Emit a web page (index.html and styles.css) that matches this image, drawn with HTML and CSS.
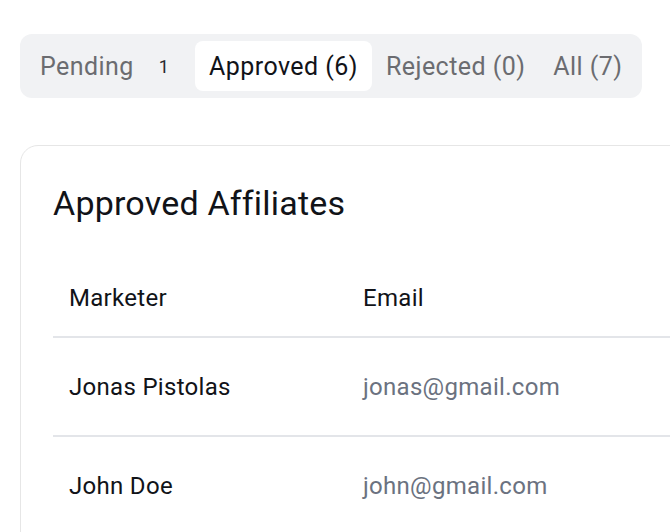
FILE: index.html
```html
<!DOCTYPE html>
<html>
<head>
<meta charset="utf-8">
<link rel="stylesheet" href="styles.css">
</head>
<body>
<div class="page">
  <div class="tabs">
    <div class="tab">Pending <span class="badge">1</span></div>
    <div class="tab active">Approved (6)</div>
    <div class="tab">Rejected (0)</div>
    <div class="tab">All (7)</div>
  </div>
  <div class="card">
    <h2 class="title">Approved Affiliates</h2>
    <table class="table">
      <thead>
        <tr><th class="col-name">Marketer</th><th>Email</th></tr>
      </thead>
      <tbody>
        <tr><td class="col-name">Jonas Pistolas</td><td class="email">jonas@gmail.com</td></tr>
        <tr><td class="col-name">John Doe</td><td class="email">john@gmail.com</td></tr>
      </tbody>
    </table>
  </div>
</div>
</body>
</html>
```
FILE: styles.css
```css
html, body {
  margin: 0;
  padding: 0;
  overflow: hidden;
  background: #ffffff;
}
body {
  font-family: Roboto, "Noto Sans", sans-serif;
  color: #111318;
}
.page {
  padding: 34px 0 0 20px;
}
.tabs {
  display: inline-flex;
  align-items: center;
  background: #f1f2f4;
  border-radius: 12px;
  padding: 7px 6px;
}
.tab {
  display: flex;
  align-items: center;
  height: 50px;
  padding: 0 14px;
  font-size: 25px;
  letter-spacing: 0.45px;
  color: #6b6c70;
  border-radius: 8px;
  box-sizing: border-box;
  white-space: nowrap;
}
.tab.active {
  background: #ffffff;
  color: #111318;
}
.badge {
  margin-left: 13px;
  padding: 0 12px;
  font-size: 18px;
  letter-spacing: 0;
  color: #2a2a2e;
}
.card {
  margin-top: 47px;
  width: 800px;
  border: 1px solid #e6e6e6;
  border-radius: 18px;
  padding: 32px 32px 40px 32px;
}
.title {
  margin: 0;
  font-size: 34px;
  letter-spacing: 0.2px;
  font-weight: 400;
  line-height: 50px;
  color: #111318;
}
.table {
  margin-top: 29px;
  width: 100%;
  border-collapse: collapse;
}
.table th, .table td {
  text-align: left;
  font-size: 24px;
  letter-spacing: 0.3px;
  font-weight: 400;
  padding: 0 16px;
  color: #111318;
}
.table th {
  height: 80px;
  padding-top: 2px;
  box-sizing: border-box;
}
.table td {
  height: 97px;
  border-top: 2px solid #e3e5e9;
}
.col-name {
  width: 262px;
}
.table td.email {
  color: #6b7280;
}
```
